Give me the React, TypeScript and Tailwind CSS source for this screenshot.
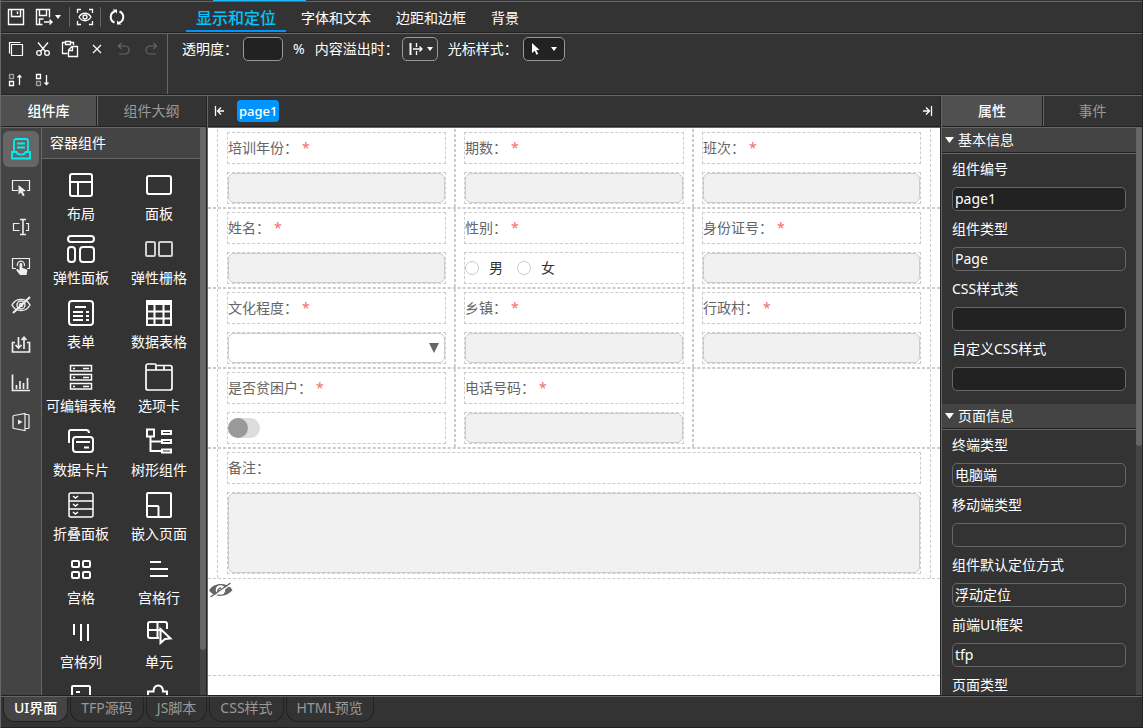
import React, { useState } from 'react';

interface IconProps {
  size?: number;
  className?: string;
  strokeWidth?: number;
  children: React.ReactNode;
}

function Icon({ size = 28, className = '', strokeWidth = 2, children }: IconProps) {
  return (
    <svg
      width={size}
      height={size}
      viewBox={`0 0 ${size} ${size}`}
      fill="none"
      stroke="currentColor"
      strokeWidth={strokeWidth}
      className={`shrink-0 ${className}`}
      aria-hidden="true"
    >
      {children}
    </svg>
  );
}

function Caret({ className = '' }: { className?: string }) {
  return (
    <svg width="6" height="4" viewBox="0 0 6 4" className={`shrink-0 ${className}`} aria-hidden="true">
      <path d="M0 0h6L3 4z" fill="currentColor" />
    </svg>
  );
}

const paletteItems: { name: string; icon: React.ReactNode }[] = [
  { name: '布局', icon: <Icon><rect x="3" y="3" width="22" height="22" rx="2" /><path d="M3 11h22M11 11v14" /></Icon> },
  { name: '面板', icon: <Icon><rect x="2" y="5" width="24" height="18" rx="2" /></Icon> },
  {
    name: '弹性面板',
    icon: (
      <Icon>
        <rect x="1" y="1" width="26" height="6" rx="3" />
        <rect x="1" y="12" width="7" height="15" rx="3" />
        <rect x="13" y="12" width="14" height="15" rx="3" />
      </Icon>
    ),
  },
  {
    name: '弹性栅格',
    icon: (
      <Icon className="text-[#cfcfcf]">
        <rect x="1" y="7" width="9" height="14" rx="1" />
        <rect x="14" y="7" width="13" height="14" rx="1" />
      </Icon>
    ),
  },
  {
    name: '表单',
    icon: (
      <Icon>
        <rect x="2" y="2" width="24" height="24" rx="3" />
        <path d="M8 8h11M6 13h10M6 17h10M6 21h10M19 13h3M19 17h3M19 21h3" />
      </Icon>
    ),
  },
  {
    name: '数据表格',
    icon: (
      <Icon>
        <path d="M1 1h26v5H1z" fill="currentColor" stroke="none" />
        <path d="M2 2h24v24H2zM2 12.500h24M2 19.500h24M9.500 5v21M18.500 5v21" />
      </Icon>
    ),
  },
  {
    name: '可编辑表格',
    icon: (
      <Icon strokeWidth={1.5}>
        <rect x="3.500" y="2.500" width="21" height="5.500" />
        <rect x="3.500" y="11.500" width="21" height="5.500" />
        <rect x="3.500" y="20.500" width="21" height="5.500" />
        <path d="M6 5.500h2M16 5.500h6M6 14.500h2M16 14.500h6M6 23.500h2M16 23.500h6" />
      </Icon>
    ),
  },
  {
    name: '选项卡',
    icon: (
      <Icon strokeWidth={1.7}>
        <path d="M1 7V3a2 2 0 0 1 2-2h7a1 1 0 0 1 1 1v5M11 2.500h14a2 2 0 0 1 2 2V25a2 2 0 0 1-2 2H3a2 2 0 0 1-2-2V7h26M19 3v4" />
      </Icon>
    ),
  },
  {
    name: '数据卡片',
    icon: (
      <Icon>
        <path d="M2 16V5a2 2 0 0 1 2-2h15a3 3 0 0 1 3 3" />
        <rect x="6" y="10" width="20" height="15" rx="3" />
        <path d="M9 15h14M17 20.500h5" />
      </Icon>
    ),
  },
  {
    name: '树形组件',
    icon: (
      <Icon>
        <path d="M2 2.500h7v7H2zM5.500 10v14H16M5.500 14.500H16" />
        <path d="M17 4h9v3h-9zM17 13h9v3h-9zM17 22.500h9v3h-9z" />
      </Icon>
    ),
  },
  {
    name: '折叠面板',
    icon: (
      <Icon strokeWidth={1.5}>
        <rect x="2" y="2" width="24" height="24" rx="2" />
        <path d="M2 10h24M2 18h24" />
        <path d="M6 5l2.500 2L11 5M6 13l2.500 2 2.500-2M6 21l2.500 2 2.500-2" />
      </Icon>
    ),
  },
  { name: '嵌入页面', icon: <Icon><rect x="2" y="2" width="24" height="24" rx="1" /><path d="M2 15h10.500a1 1 0 0 1 1 1v10" /></Icon> },
  {
    name: '宫格',
    icon: (
      <Icon>
        <rect x="5" y="6" width="7" height="6" rx="1" />
        <rect x="16" y="6" width="7" height="6" rx="1" />
        <rect x="5" y="17" width="7" height="6" rx="1" />
        <rect x="16" y="17" width="7" height="6" rx="1" />
      </Icon>
    ),
  },
  { name: '宫格行', icon: <Icon><path d="M5 7h11M5 14h18M5 21h18" /></Icon> },
  { name: '宫格列', icon: <Icon><path d="M7 5v11M14 5v17M21 5v17" /></Icon> },
  {
    name: '单元',
    icon: (
      <Icon>
        <path d="M14 19H5a2 2 0 0 1-2-2V5a2 2 0 0 1 2-2h15a2 2 0 0 1 2 2v5M3 11h12M12.500 3v16" />
        <path d="M15.500 10l10 9.500-5.500.500-4.500 4z" />
      </Icon>
    ),
  },
  { name: '', icon: <Icon><rect x="5" y="3" width="18" height="20" rx="1" /><path d="M9 9h4" /></Icon> },
  { name: '', icon: <Icon><path d="M3 23V8.500h5.500c-.5-8 10-8 9.500 0h4V23" /></Icon> },
];

const handPath = 'M9.500 9.500a1.400 1.400 0 0 1 2.800 0V13l4 1.200c.8.300 1.200 1 1 1.800L16.500 20H10l-3.500-4.500c-.6-1 .8-1.900 1.700-1.100l1.300 1z';

const railItems: { name: string; icon: React.ReactNode }[] = [
  {
    name: '容器组件',
    icon: (
      <Icon size={22} strokeWidth={1.8}>
        <path d="M4 14V3a2 2 0 0 1 2-2h10a2 2 0 0 1 2 2v11M7 5.500h8M7 9.500h8" />
        <path d="M2 14h4.500c1 3.500 8 3.500 9 0H20v6.500H2z" />
      </Icon>
    ),
  },
  {
    name: '按钮组件',
    icon: (
      <Icon size={22} strokeWidth={1.2}>
        <path d="M8 13.500H2.500v-10h17v10H17" />
        <path d="M8.500 8l7.500 6-3.300.500 2 3.800-1.800 1-2-3.900L8.500 17.500z" fill="currentColor" stroke="none" />
      </Icon>
    ),
  },
  {
    name: '输入组件',
    icon: (
      <Icon size={22} strokeWidth={1.2}>
        <path d="M9.500 7.500h-6v7h6M16 7.500h2.500v7H16" />
        <path d="M13 4v14M10 3.500h6M10 18.500h6" strokeWidth={1.6} />
      </Icon>
    ),
  },
  {
    name: '选择组件',
    icon: (
      <Icon size={22} strokeWidth={1.2}>
        <path d="M6 13.500H2.500v-10h17v10H17M7.500 11a3.600 3.600 0 1 1 6.800 0" />
        <path d={handPath} fill="currentColor" stroke="none" />
      </Icon>
    ),
  },
  {
    name: '隐藏组件',
    icon: (
      <Icon size={22} strokeWidth={1.4}>
        <path d="M2 11c4-7.500 14-7.500 18 0-4 7.500-14 7.500-18 0z" />
        <circle cx="11" cy="11" r="4" />
        <circle cx="11" cy="11" r="1.500" />
        <path d="M3 19L20 3" strokeWidth={2} />
      </Icon>
    ),
  },
  {
    name: '导入导出',
    icon: (
      <Icon size={22} strokeWidth={1.7}>
        <path d="M5 9.500H2.500V19h17V9.500H17M8.500 4v11M5.500 12l3 3 3-3M14 16V4.500M11.500 7L14 4.300 16.500 7" />
      </Icon>
    ),
  },
  { name: '图表组件', icon: <Icon size={22} strokeWidth={1.7}><path d="M2.500 2.500v16H20M6.500 17v-4M10 17V9M13.500 17v-6M17.500 17V6" /></Icon> },
  {
    name: '媒体组件',
    icon: (
      <Icon size={22} strokeWidth={1.2}>
        <path d="M4 4.500l11-2v17l-11-2a1 1 0 0 1-1-1v-11a1 1 0 0 1 1-1zM15 3.500h3a1 1 0 0 1 1 1v12a1 1 0 0 1-1 1h-3" />
        <path d="M8 8.500l4.500 2.500L8 13.500z" fill="currentColor" stroke="none" />
      </Icon>
    ),
  },
];

const editActions: { name: string; disabled?: boolean; icon: React.ReactNode }[] = [
  { name: '复制', icon: <Icon size={18} strokeWidth={1.2}><path d="M4.500 4.500h11v11h-11zM2.500 13.500v-11h11" /></Icon> },
  {
    name: '剪切',
    icon: (
      <Icon size={18} strokeWidth={1.3}>
        <circle cx="5" cy="13" r="2.300" />
        <circle cx="13" cy="13" r="2.300" />
        <path d="M4 2.500l7.500 9M14 2.500l-7.500 9" />
      </Icon>
    ),
  },
  {
    name: '粘贴',
    icon: (
      <Icon size={18} strokeWidth={1.3}>
        <path d="M6.500 13.500h-5v-11h3M9.500 2.500h3V5M4.500 1.500h5v3h-5z" />
        <path d="M7.500 10L11 6.500h5.500v10h-9zM11.500 6.500v4h-4" />
      </Icon>
    ),
  },
  { name: '删除', icon: <Icon size={18} strokeWidth={1.2}><path d="M5 5l8 8M13 5l-8 8" /></Icon> },
  { name: '撤销', disabled: true, icon: <Icon size={18} strokeWidth={1.2}><path d="M6.500 3l-3 3 3 3M3.500 6H10a4 4 0 0 1 0 8H4" /></Icon> },
  { name: '重做', disabled: true, icon: <Icon size={18} strokeWidth={1.2}><path d="M11.500 3l3 3-3 3M14.500 6H8a4 4 0 0 0 0 8h6" /></Icon> },
  {
    name: '上移',
    icon: (
      <Icon size={18} strokeWidth={1.3}>
        <path d="M2.500 3.500h4v4h-4z" strokeDasharray="1 1" />
        <path d="M2.500 10.500h4v4h-4zM12.500 14V4.500M10.500 6.500l2-2 2 2" />
      </Icon>
    ),
  },
  {
    name: '下移',
    icon: (
      <Icon size={18} strokeWidth={1.3}>
        <path d="M2.500 10.500h4v4h-4z" strokeDasharray="1 1" />
        <path d="M2.500 3.500h4v4h-4zM12.500 4v9.500M10.500 11.500l2 2 2-2" />
      </Icon>
    ),
  },
];

interface FieldConfig {
  label: string;
  kind: 'text' | 'radio' | 'select' | 'switch';
}

const formRows: FieldConfig[][] = [
  [
    { label: '培训年份', kind: 'text' },
    { label: '期数', kind: 'text' },
    { label: '班次', kind: 'text' },
  ],
  [
    { label: '姓名', kind: 'text' },
    { label: '性别', kind: 'radio' },
    { label: '身份证号', kind: 'text' },
  ],
  [
    { label: '文化程度', kind: 'select' },
    { label: '乡镇', kind: 'text' },
    { label: '行政村', kind: 'text' },
  ],
  [
    { label: '是否贫困户', kind: 'switch' },
    { label: '电话号码', kind: 'text' },
  ],
];

function FieldControl({ field }: { field: FieldConfig }) {
  if (field.kind === 'radio') {
    return (
      <div className="flex h-full items-center">
        {['男', '女'].map((option) => (
          <label key={option} className="mr-3.5 flex items-center gap-2.5 text-[#333]">
            <input type="radio" name={field.label} className="size-3.5 appearance-none rounded-full border border-[#ccc] bg-white" />
            {option}
          </label>
        ))}
      </div>
    );
  }
  if (field.kind === 'select') {
    return (
      <div className="relative h-full">
        <select id={field.label} className="h-full w-full appearance-none rounded-md border border-[#ccc] bg-white px-2">
          <option value=""></option>
        </select>
        <svg width="10" height="10" viewBox="0 0 10 10" className="pointer-events-none absolute top-2.5 right-1.5" aria-hidden="true">
          <path d="M0 0h10L5 10z" fill="#666" />
        </svg>
      </div>
    );
  }
  if (field.kind === 'switch') {
    return (
      <div className="flex h-full items-center">
        <button id={field.label} type="button" role="switch" aria-checked="false" className="flex h-5 w-8 rounded-full bg-[#ddd]">
          <span className="size-5 rounded-full bg-[#999]"></span>
        </button>
      </div>
    );
  }
  return <input id={field.label} type="text" className="block h-full w-full rounded-md border border-[#ccc] bg-[#f1f1f1] px-2" />;
}

function FormCell({ field }: { field?: FieldConfig }) {
  if (!field) {
    return <div className="border-x border-dashed border-[#ccc]"></div>;
  }
  return (
    <div className="flex min-w-0 flex-col gap-2 border-x border-dashed border-[#ccc] px-2 py-[3px] first:pl-[9px] last:pr-[9px]">
      <div className="flex h-8 items-center border border-dashed border-[#ccc]">
        <label htmlFor={field.label}>{field.label}：</label>
        <span className="ml-1 text-[#f56c6c]">*</span>
      </div>
      <div className="h-8 border border-dashed border-[#ccc]">
        <FieldControl field={field} />
      </div>
    </div>
  );
}

function Canvas() {
  return (
    <div className="min-h-0 flex-1 overflow-hidden bg-white text-[#666]">
      {formRows.map((row, index) => (
        <div
          key={index}
          className="grid h-20 grid-cols-3 border-y border-dashed border-[#ccc] px-[9px] first:border-t-transparent"
        >
          {[0, 1, 2].map((col) => (
            <FormCell key={col} field={row[col]} />
          ))}
        </div>
      ))}
      <div className="border-y border-dashed border-[#ccc] px-[9px]">
        <div className="flex flex-col gap-2 border-x border-dashed border-[#ccc] px-[9px] pt-[3px] pb-1">
          <div className="flex h-8 items-center border border-dashed border-[#ccc]">
            <label htmlFor="remark">备注：</label>
          </div>
          <div className="border border-dashed border-[#ccc]">
            <textarea id="remark" className="block h-20 w-full resize-none rounded-md border border-[#ccc] bg-[#f1f1f1] px-2"></textarea>
          </div>
        </div>
      </div>
      <div className="h-[97px] border-b border-dashed border-[#ccc] pt-[3px] pl-px">
        <svg width="24" height="16" viewBox="0 0 24 16" aria-hidden="true">
          <path d="M0 8.500C5 0 18 0 23.500 8 18 15.500 5 16 0 8.500z" fill="#666" />
          <circle cx="11.500" cy="8" r="4.800" fill="#fff" />
          <path d="M9 10a3 3 0 0 1 3-4" stroke="#666" strokeWidth="1.500" fill="none" />
          <path d="M2.500 16L22.500 2" stroke="#fff" strokeWidth="1.500" />
          <path d="M1.500 15L21.500 1" stroke="#666" strokeWidth="1.500" />
        </svg>
      </div>
    </div>
  );
}

interface PropertyField {
  label: string;
  value: string;
  editable?: boolean;
}

const propertySections: { title: string; fields: PropertyField[] }[] = [
  {
    title: '基本信息',
    fields: [
      { label: '组件编号', value: 'page1', editable: true },
      { label: '组件类型', value: 'Page' },
      { label: 'CSS样式类', value: '', editable: true },
      { label: '自定义CSS样式', value: '', editable: true },
    ],
  },
  {
    title: '页面信息',
    fields: [
      { label: '终端类型', value: '电脑端' },
      { label: '移动端类型', value: '' },
      { label: '组件默认定位方式', value: '浮动定位' },
      { label: '前端UI框架', value: 'tfp' },
      { label: '页面类型', value: '' },
    ],
  },
];

interface PanelTabsProps {
  tabs: string[];
  active: string;
  onSelect: (tab: string) => void;
  className?: string;
}

function PanelTabs({ tabs, active, onSelect, className = 'grid-cols-2' }: PanelTabsProps) {
  return (
    <div className={`grid h-[31px] shrink-0 border-b border-[#222] ${className}`}>
      {tabs.map((tab) => (
        <button
          key={tab}
          type="button"
          onClick={() => onSelect(tab)}
          className={`border-[#222] not-first:border-l not-first:shadow-[inset_1px_0_0_#666] ${
            tab === active ? 'bg-[#505050] font-medium text-white' : 'text-[#999]'
          }`}
        >
          {tab}
        </button>
      ))}
    </div>
  );
}

const styleTabs = ['显示和定位', '字体和文本', '边距和边框', '背景'];
const viewTabs = ['UI界面', 'TFP源码', 'JS脚本', 'CSS样式', 'HTML预览'];

export default function App() {
  const [styleTab, setStyleTab] = useState('显示和定位');
  const [leftTab, setLeftTab] = useState('组件库');
  const [rightTab, setRightTab] = useState('属性');
  const [viewTab, setViewTab] = useState('UI界面');
  const [railItem, setRailItem] = useState('容器组件');

  return (
    <div className="flex h-screen flex-col overflow-hidden border-r border-l border-r-[#222] border-l-[#666] bg-[#333] font-['Noto_Sans','Noto_Sans_CJK_SC',sans-serif] text-sm text-white">
      <div className="h-px shrink-0 pl-[212px]">
        <div className="h-px w-[93px] bg-[#1fb6f5]"></div>
      </div>

      <header className="shrink-0">
        <div className="flex h-8 border-t border-b border-t-[#666] border-b-[#222]">
          <div className="flex w-[185px] items-center pl-1.5">
            <button type="button" aria-label="保存">
              <Icon size={18} strokeWidth={1.4}><path d="M1.500 1.500h15v15h-15zM4.500 1.500v7h9v-7M10.500 3.500V6" /></Icon>
            </button>
            <button type="button" aria-label="另存为" className="ml-2.5 flex items-center gap-0.5">
              <Icon size={18} strokeWidth={1.4}>
                <path d="M7.500 16.500h-6v-15h13v8M4.500 1.500v6h7v-6M4.500 16v-5h4M9 14h8M14.500 11.500L17 14l-2.500 2.500" />
              </Icon>
              <Caret />
            </button>
            <div className="ml-2 h-5 w-px bg-[#666]"></div>
            <button type="button" aria-label="预览" className="ml-1.5">
              <Icon size={18} strokeWidth={1.3}>
                <path d="M1.500 5V1.500H5M13 1.500h3.500V5M16.500 13v3.500H13M5 16.500H1.500V13" />
                <path d="M3 9c3-5 9-5 12 0-3 5-9 5-12 0z" />
                <circle cx="9" cy="9" r="2" />
              </Icon>
            </button>
            <div className="ml-1.5 h-5 w-px bg-[#666]"></div>
            <button type="button" aria-label="刷新" className="ml-[7px]">
              <Icon size={18}>
                <path d="M7 3.200A6 6 0 0 0 6.500 14.500M11 14.800A6 6 0 0 0 11.500 3.500" />
                <path d="M4.500 1.500h4.500v4zM13.500 16.500H9v-4z" fill="currentColor" stroke="none" />
              </Icon>
            </button>
          </div>
          <nav className="flex gap-[5px]">
            {styleTabs.map((tab) => (
              <button
                key={tab}
                type="button"
                onClick={() => setStyleTab(tab)}
                className={`border-b-2 px-2.5 pt-1 ${
                  tab === styleTab ? 'border-[#0094ff] text-base font-medium text-[#00c3ff]' : 'border-transparent'
                }`}
              >
                {tab}
              </button>
            ))}
          </nav>
        </div>

        <div className="flex h-[62px] border-t border-b border-t-[#666] border-b-[#222]">
          <div className="flex w-[167px] flex-wrap content-start border-r border-[#666] pl-px">
            {editActions.map((action) => (
              <button
                key={action.name}
                type="button"
                aria-label={action.name}
                disabled={action.disabled}
                className="flex h-[31px] w-[27px] items-center justify-center pb-0.5 disabled:text-[#666]"
              >
                {action.icon}
              </button>
            ))}
          </div>
          <div className="flex h-[31px] items-center pb-0.5 pl-3.5">
            <label htmlFor="opacity">透明度：</label>
            <input id="opacity" type="text" className="ml-[5px] h-6 w-10 rounded-[5px] border border-[#999] bg-[#222] px-1" />
            <span className="ml-2.5">%</span>
            <span className="ml-2.5">内容溢出时：</span>
            <button type="button" aria-label="内容溢出时" className="ml-[3px] flex h-6 w-9 items-center justify-center gap-0.5 rounded-[5px] border border-[#999]">
              <Icon size={18} strokeWidth={1.3}>
                <path d="M3.500 3v12" strokeWidth={2} />
                <path d="M6 9h9M12.500 6.500L15 9l-2.500 2.500M9.500 3v4M9.500 11v4" />
              </Icon>
              <Caret />
            </button>
            <span className="ml-2.5">光标样式：</span>
            <button type="button" aria-label="光标样式" className="ml-[5px] flex h-6 w-[42px] items-center justify-center gap-2.5 rounded-[5px] border border-[#999] bg-[#222]">
              <svg width="10" height="12" viewBox="0 0 10 12" aria-hidden="true">
                <path d="M1 0l7.500 7H5.300l1.900 4-1.700.800L3.700 7.800 1 10z" fill="currentColor" />
              </svg>
              <Caret />
            </button>
          </div>
        </div>
      </header>

      <main className="flex min-h-0 flex-1 border-t border-b border-t-[#666] border-b-[#222]">
        <aside className="flex w-[206px] shrink-0 flex-col border-r border-[#222]">
          <PanelTabs tabs={['组件库', '组件大纲']} active={leftTab} onSelect={setLeftTab} className="grid-cols-[95px_1fr]" />
          <div className="flex min-h-0 flex-1 border-t border-[#666]">
            <div className="flex w-[41px] shrink-0 flex-col items-center gap-[3px] border-r border-[#666] bg-[#444] pt-[3px]">
              {railItems.map((item) => (
                <button
                  key={item.name}
                  type="button"
                  aria-label={item.name}
                  onClick={() => setRailItem(item.name)}
                  className={`flex size-9 shrink-0 items-center justify-center rounded-md ${
                    item.name === railItem ? 'bg-[#666] text-[#00f0f0]' : 'text-[#eee]'
                  }`}
                >
                  {item.icon}
                </button>
              ))}
            </div>
            <div className="flex min-w-0 flex-1 flex-col">
              <h2 className="h-[31px] shrink-0 border-b border-[#666] bg-[#444] pl-2 leading-[30px]">容器组件</h2>
              <div className="grid min-h-0 flex-1 auto-rows-[64px] grid-cols-2 overflow-hidden pt-3 pr-0.5">
                {paletteItems.map((item, index) => (
                  <button key={index} type="button" className="flex flex-col items-center gap-[5px] leading-5 whitespace-nowrap">
                    {item.icon}
                    {item.name && <span>{item.name}</span>}
                  </button>
                ))}
              </div>
            </div>
            <div className="w-1.5 shrink-0 bg-[#444]">
              <div className="h-[92%] rounded-b-sm bg-[#666]"></div>
            </div>
          </div>
        </aside>

        <section className="flex min-w-0 flex-1 flex-col border-r border-l border-r-[#222] border-l-[#666]">
          <div className="flex h-[31px] shrink-0 items-center border-b border-[#222] pr-[5px] pl-1">
            <button type="button" aria-label="向左滚动">
              <Icon size={14} strokeWidth={1.3}><path d="M3.500 2v10M12 7H5.500M9 3.500L5.500 7 9 10.500" /></Icon>
            </button>
            <button type="button" className="ml-[11px] h-[22px] rounded bg-[#0094ff] px-0.5 text-[13px] font-medium">page1</button>
            <button type="button" aria-label="向右滚动" className="ml-auto">
              <Icon size={14} strokeWidth={1.3}><path d="M10.500 2v10M2 7h6.500M5 3.500L8.500 7 5 10.500" /></Icon>
            </button>
          </div>
          <div className="flex min-h-0 flex-1 flex-col border-t border-[#666]">
            <Canvas />
          </div>
        </section>

        <aside className="flex w-[201px] shrink-0 flex-col border-l border-[#666]">
          <PanelTabs tabs={['属性', '事件']} active={rightTab} onSelect={setRightTab} />
          <div className="flex min-h-0 flex-1 border-t border-[#666]">
            <div className="min-w-0 flex-1 overflow-hidden">
              {propertySections.map((section) => (
                <div key={section.title} className="pb-2.5">
                  <h2 className="flex h-[25px] items-center gap-1 border-b border-[#222] bg-[#444] pl-[3px]">
                    <svg width="9" height="6" viewBox="0 0 9 6" aria-hidden="true">
                      <path d="M0 0h9L4.500 6z" fill="currentColor" />
                    </svg>
                    {section.title}
                  </h2>
                  <div className="border-t border-[#666] px-2.5">
                    {section.fields.map((field) => (
                      <div key={field.label} className="h-[60px] pt-[5px]">
                        <label htmlFor={field.label} className="mb-2 block leading-5">{field.label}</label>
                        <input
                          id={field.label}
                          type="text"
                          defaultValue={field.value}
                          readOnly={!field.editable}
                          className={`block h-6 w-full rounded-[5px] border border-[#666] px-0.5 pb-0.5 ${
                            field.editable ? 'bg-[#222]' : 'bg-transparent'
                          }`}
                        />
                      </div>
                    ))}
                  </div>
                </div>
              ))}
            </div>
            <div className="w-1.5 shrink-0 bg-[#444]">
              <div className="h-[56%] rounded-b-sm bg-[#666]"></div>
            </div>
          </div>
        </aside>
      </main>

      <footer className="flex h-8 shrink-0 items-start gap-0.5 border-t border-b border-t-[#666] border-b-[#222] pl-0.5">
        {viewTabs.map((tab) => (
          <button
            key={tab}
            type="button"
            onClick={() => setViewTab(tab)}
            className={`h-[25px] rounded-b-xl border border-t-0 border-[#222] px-2.5 pb-0.5 leading-[22px] ${
              tab === viewTab ? 'bg-[#444] font-medium text-white' : 'text-[#999]'
            }`}
          >
            {tab}
          </button>
        ))}
      </footer>
    </div>
  );
}
